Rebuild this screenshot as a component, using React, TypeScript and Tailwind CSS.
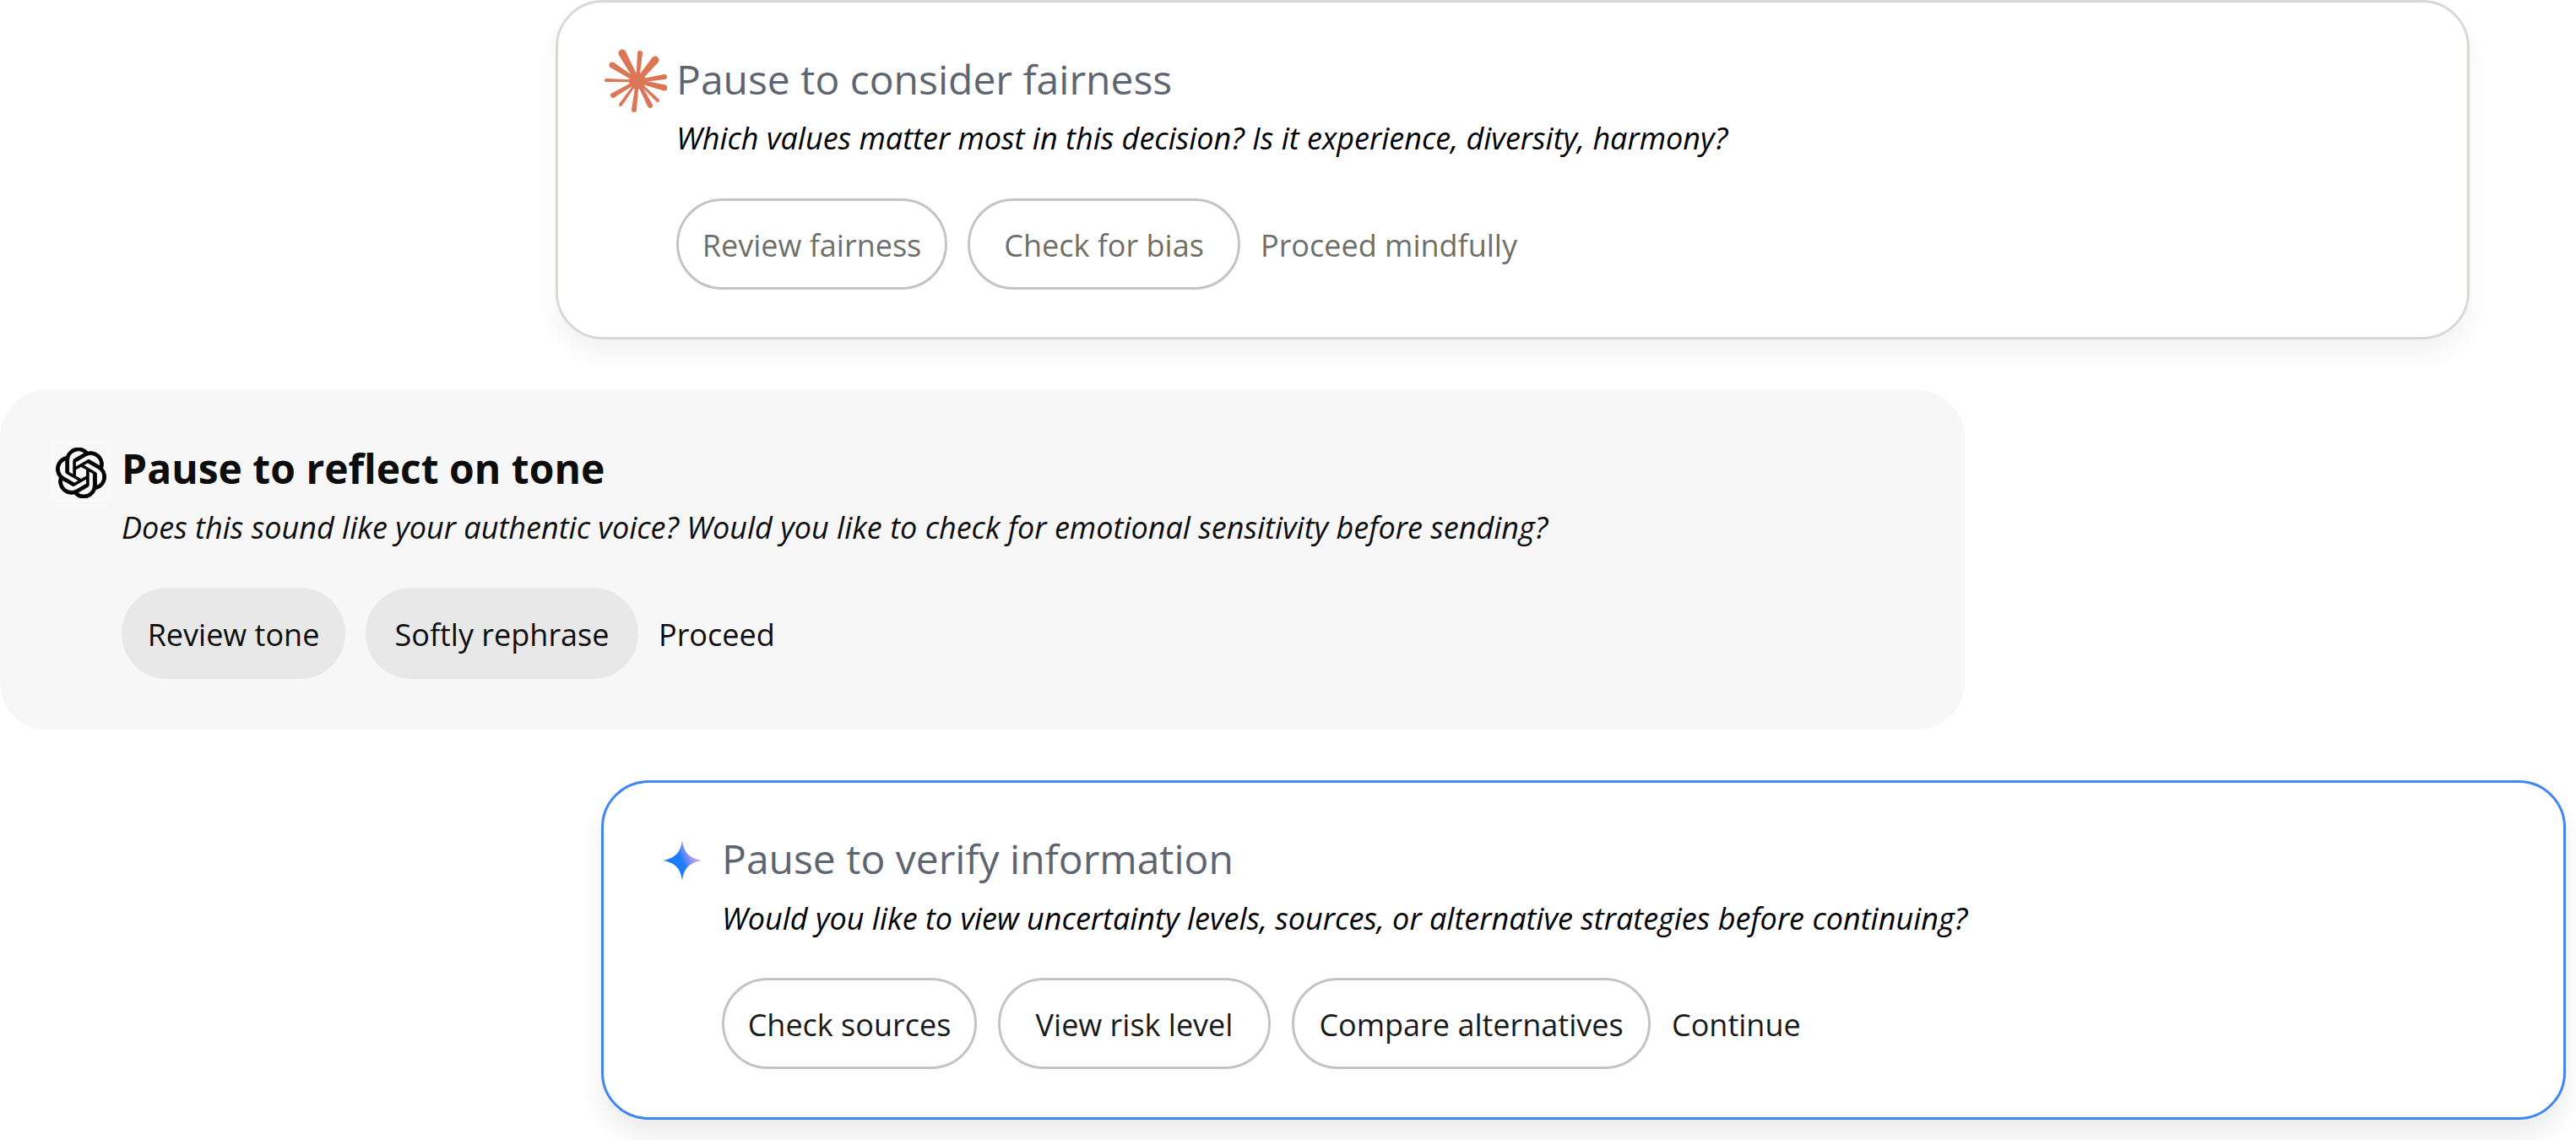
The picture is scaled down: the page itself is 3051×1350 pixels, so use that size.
import { SiOpenai } from "react-icons/si";

// tip of each ray on the star mark, with the width at the tip
const rays = [
  { x: 37, y: 13, w: 9 },
  { x: 58, y: 13, w: 6 },
  { x: 76, y: 21, w: 9 },
  { x: 87, y: 41, w: 6 },
  { x: 87, y: 54, w: 7 },
  { x: 79, y: 69, w: 4 },
  { x: 70, y: 75, w: 6 },
  { x: 51, y: 80, w: 6 },
  { x: 35, y: 74, w: 4 },
  { x: 26, y: 63, w: 6 },
  { x: 18, y: 45, w: 4 },
  { x: 25, y: 27, w: 7 },
];

function StarMark() {
  const cx = 55;
  const cy = 46;
  return (
    <svg className="w-[76px] h-[76px] shrink-0" viewBox="14 8 76 76" aria-hidden="true">
      <g fill="#DB7657">
        <circle cx={cx} cy={cy} r={10} />
        {rays.map((r) => {
          const dx = r.x - cx;
          const dy = r.y - cy;
          const len = Math.hypot(dx, dy);
          const nx = -dy / len;
          const ny = dx / len;
          const t = r.w / 2;
          const b = r.w * 0.3;
          return (
            <g key={`${r.x}-${r.y}`}>
              <polygon
                points={`${cx + nx * b},${cy + ny * b} ${r.x + nx * t},${r.y + ny * t} ${r.x - nx * t},${r.y - ny * t} ${cx - nx * b},${cy - ny * b}`}
              />
              <circle cx={r.x} cy={r.y} r={t} />
            </g>
          );
        })}
      </g>
    </svg>
  );
}

function SparkMark() {
  return (
    <svg className="w-[50px] h-[50px] shrink-0 mt-[8px]" viewBox="-25 -25 50 50" aria-hidden="true">
      <defs>
        <linearGradient id="spark" x1="0" y1="0" x2="1" y2="0.0" gradientTransform="rotate(-25 .5 .5)">
          <stop offset="0.48" stopColor="#1C7DFF" />
          <stop offset="0.78" stopColor="#B79BF2" />
        </linearGradient>
      </defs>
      <path d="M0-24C2-9 8-3 23 0 8 3 2 9 0 24-2 9-8 3-23 0-8-3-2-9 0-24Z" fill="url(#spark)" />
    </svg>
  );
}

function Pill({ label, variant, width }: { label: string; variant: "muted" | "flat" | "line"; width: string }) {
  const styles = {
    muted: "border-[3px] border-[#c4c4c4] text-[#6f6f6a]",
    flat: "bg-[#e8e8e8] text-[#0d0d0d]",
    line: "border-[3px] border-[#c4c4c4] text-[#1a1a1a]",
  };
  return (
    <button className={`h-[108px] pt-[3px] rounded-full text-[36px] leading-none whitespace-nowrap ${width} ${styles[variant]}`}>
      {label}
    </button>
  );
}

export default function App() {
  return (
    <div className="flex flex-col gap-[60px] min-h-[1350px] bg-white font-['Open_Sans',sans-serif] overflow-hidden">
      <div className="ml-[658px] w-[2267px] h-[402px] rounded-[56px] border-[3px] border-[#d8d8d4] bg-white shadow-[0_18px_30px_rgba(0,0,0,0.05)] flex pl-[53px] pt-[55px]">
        <StarMark />
        <div className="ml-[11px] -mt-[1px]">
          <h2 className="text-[48px] leading-[74px] text-[#5f6570]">Pause to consider fairness</h2>
          <p className="text-[36px] leading-[66px] italic text-black">
            Which values matter most in this decision? Is it experience, diversity, harmony?
          </p>
          <div className="mt-[38px] flex items-center gap-[24px]">
            <Pill label="Review fairness" variant="muted" width="w-[321px]" />
            <Pill label="Check for bias" variant="muted" width="w-[323px]" />
            <span className="pt-[3px] text-[36px] text-[#6f6f6a]">Proceed mindfully</span>
          </div>
        </div>
      </div>

      <div className="w-[2327px] h-[402px] rounded-[56px] bg-[#f7f7f7] flex pl-[60px] pt-[56px]">
        {/* logo sits on its own slightly lighter square */}
        <div className="w-[72px] h-[72px] shrink-0 mt-[4px] bg-[#f9f9f9] flex items-center justify-center">
          <SiOpenai className="w-[60px] h-[60px] mt-[4px] text-black" stroke="currentColor" strokeWidth={0.35} />
        </div>
        <div className="ml-[12px]">
          <h2 className="text-[48px] leading-[74px] font-bold text-[#0d0d0d]">Pause to reflect on tone</h2>
          <p className="text-[36px] leading-[66px] italic text-[#0d0d0d]">
            Does this sound like your authentic voice? Would you like to check for emotional sensitivity before sending?
          </p>
          <div className="mt-[38px] flex items-center gap-[24px]">
            <Pill label="Review tone" variant="flat" width="w-[265px]" />
            <Pill label="Softly rephrase" variant="flat" width="w-[323px]" />
            <span className="pt-[3px] text-[36px] text-[#0d0d0d]">Proceed</span>
          </div>
        </div>
      </div>

      <div className="ml-[712px] w-[2327px] h-[402px] rounded-[56px] border-[3px] border-[#4285f4] bg-white shadow-[0_18px_30px_rgba(0,0,0,0.08)] flex pl-[68px] pt-[59px]">
        <SparkMark />
        <div className="ml-[22px] -mt-[6px]">
          <h2 className="text-[48px] leading-[74px] text-[#5f6570]">Pause to verify information</h2>
          <p className="text-[36px] leading-[68px] italic text-black">
            Would you like to view uncertainty levels, sources, or alternative strategies before continuing?
          </p>
          <div className="mt-[36px] flex items-center gap-[25px]">
            <Pill label="Check sources" variant="line" width="w-[302px]" />
            <Pill label="View risk level" variant="line" width="w-[323px]" />
            <Pill label="Compare alternatives" variant="line" width="w-[425px]" />
            <span className="pt-[3px] text-[36px] text-[#1a1a1a]">Continue</span>
          </div>
        </div>
      </div>
    </div>
  );
}
